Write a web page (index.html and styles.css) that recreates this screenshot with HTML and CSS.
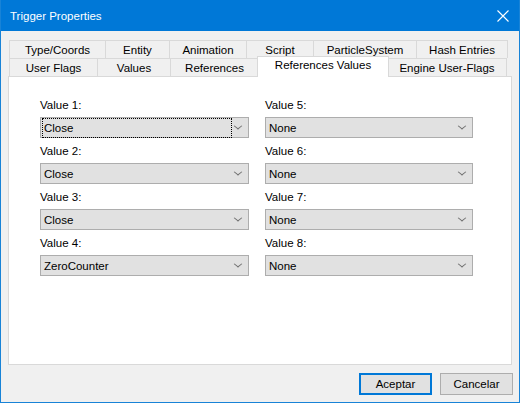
FILE: index.html
```html
<!DOCTYPE html>
<html lang="es">
<head>
  <meta charset="UTF-8" />
  <title>Trigger Properties</title>
  <link rel="stylesheet" href="styles.css">
</head>
<body>
  <div class="window">
    <div class="titlebar">
      <span class="title">Trigger Properties</span>
      <svg class="close" width="12" height="12" viewBox="0 0 12 12">
        <path d="M0.5 0.5 L11.5 11.5 M11.5 0.5 L0.5 11.5" stroke="#fff" stroke-width="1.1" fill="none"/>
      </svg>
    </div>

    <div class="tabs">
      <div class="tab-row">
        <div class="tab" style="width:96px">Type/Coords</div>
        <div class="tab" style="width:64px">Entity</div>
        <div class="tab" style="width:77px">Animation</div>
        <div class="tab" style="width:67px">Script</div>
        <div class="tab" style="width:103px">ParticleSystem</div>
        <div class="tab last" style="width:92px">Hash Entries</div>
      </div>
      <div class="tab-row">
        <div class="tab" style="width:88px">User Flags</div>
        <div class="tab" style="width:73px">Values</div>
        <div class="tab" style="width:88px">References</div>
        <div class="tab selected" style="width:132px">References Values</div>
        <div class="tab last" style="width:119px">Engine User-Flags</div>
      </div>
    </div>

    <div class="panel">
      <div class="grid">
        <div class="column">
          <div class="field">
            <label>Value 1:</label>
            <div class="select focused"><span class="value">Close</span><span class="arrow"></span></div>
          </div>
          <div class="field">
            <label>Value 2:</label>
            <div class="select"><span class="value">Close</span><span class="arrow"></span></div>
          </div>
          <div class="field">
            <label>Value 3:</label>
            <div class="select"><span class="value">Close</span><span class="arrow"></span></div>
          </div>
          <div class="field">
            <label>Value 4:</label>
            <div class="select"><span class="value">ZeroCounter</span><span class="arrow"></span></div>
          </div>
        </div>
        <div class="column">
          <div class="field">
            <label>Value 5:</label>
            <div class="select"><span class="value">None</span><span class="arrow"></span></div>
          </div>
          <div class="field">
            <label>Value 6:</label>
            <div class="select"><span class="value">None</span><span class="arrow"></span></div>
          </div>
          <div class="field">
            <label>Value 7:</label>
            <div class="select"><span class="value">None</span><span class="arrow"></span></div>
          </div>
          <div class="field">
            <label>Value 8:</label>
            <div class="select"><span class="value">None</span><span class="arrow"></span></div>
          </div>
        </div>
      </div>
    </div>

    <div class="buttons">
      <button class="btn default">Aceptar</button>
      <button class="btn">Cancelar</button>
    </div>
  </div>
</body>
</html>
```

FILE: styles.css
```css
* {
  box-sizing: border-box;
}

body {
  margin: 0;
  font-family: 'Liberation Sans', Arial, sans-serif;
  font-size: 11.5px;
  color: #000;
}

.window {
  width: 520px;
  height: 403px;
  border: 1px solid #1883d7;
  border-top: none;
  background: #f0f0f0;
}

.titlebar {
  height: 31px;
  background: #0078d7;
  color: #fff;
  display: flex;
  align-items: center;
  justify-content: space-between;
  padding: 0 10px 0 9px;
}

.title {
  font-size: 11.5px;
}

.close {
  display: block;
}

.tabs {
  margin: 9px 0 0 8px;
}

.tab-row {
  display: flex;
  align-items: flex-start;
  height: 18px;
}

.tab {
  height: 18px;
  line-height: 19px;
  text-align: center;
  border: 1px solid #d9d9d9;
  border-right: none;
  border-bottom: none;
  background: #f0f0f0;
  white-space: nowrap;
}

.tab.last {
  border-right: 1px solid #d9d9d9;
}

.tab.selected {
  position: relative;
  z-index: 2;
  height: 21px;
  line-height: 17px;
  margin: -2px -1px 0 -1px;
  background: #fff;
  border-right: 1px solid #d9d9d9;
}

.tab.selected + .tab {
  border-left: none;
}

.panel {
  margin-left: 7px;
  width: 504px;
  height: 289px;
  background: #fff;
  border: 1px solid #d9d9d9;
  padding: 21px 0 0 31px;
}

.grid {
  display: grid;
  grid-template-columns: 209px 208px;
  column-gap: 16px;
}

.column {
  display: flex;
  flex-direction: column;
  gap: 6px;
}

.field label {
  display: block;
  height: 15px;
  line-height: 15px;
  margin-bottom: 4px;
  color: #000;
}

.select {
  position: relative;
  height: 21px;
  background: #e1e1e1;
  border: 1px solid #adadad;
  display: flex;
  align-items: center;
  padding-left: 3px;
}

.select .value {
  line-height: 18px;
}

.select.focused .value {
  flex: 0 0 188px;
  height: 18px;
  margin-left: -1px;
  padding-left: 1px;
  outline: 1px dotted #000;
}

.arrow {
  position: absolute;
  right: 7px;
  top: 5px;
  width: 6px;
  height: 6px;
  border-right: 1px solid #707070;
  border-bottom: 1px solid #707070;
  transform: scaleY(0.8) rotate(45deg);
}

.buttons {
  display: flex;
  justify-content: flex-end;
  gap: 8px;
  padding: 8px 6px 0 0;
}

.btn {
  width: 73px;
  height: 22px;
  font-family: inherit;
  font-size: 11.5px;
  background: #e1e1e1;
  border: 1px solid #adadad;
  padding: 0;
  color: #000;
}

.btn.default {
  border: 2px solid #0078d7;
}
```
